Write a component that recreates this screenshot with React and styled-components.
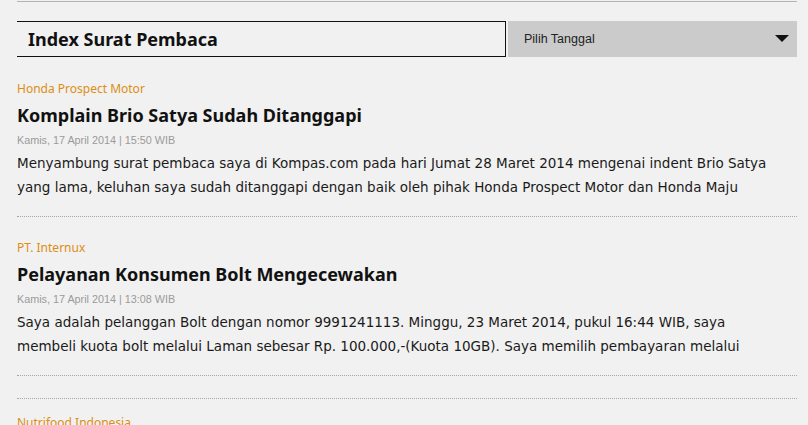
import React from "react";
import styled, { createGlobalStyle } from "styled-components";

const GlobalStyle = createGlobalStyle`
  html, body {
    margin: 0;
    padding: 0;
    background: #f1f1f1;
  }
  body {
    font-family: "Noto Sans", "DejaVu Sans", sans-serif;
    color: #111;
  }
`;

const Page = styled.div`
  width: 780px;
  padding: 0 11px 0 17px;
  height: 425px;
  overflow: hidden;
`;

const TopRule = styled.div`
  margin-top: 1px;
  height: 1px;
  background: #b3b3b3;
`;

const Header = styled.div`
  display: flex;
  margin: 19px 0 1px;
  height: 36px;
`;

const HeaderTitle = styled.h1`
  flex: 0 0 489px;
  box-sizing: border-box;
  margin: 0;
  padding-left: 11px;
  border-top: 1.5px solid #111;
  border-bottom: 1.5px solid #111;
  border-right: 1px solid #111;
  display: flex;
  align-items: center;
  font-size: 18px;
  font-weight: 700;
  color: #111;
`;

const Select = styled.div`
  flex: 1;
  margin-left: 2px;
  background: #cbcbcb;
  display: flex;
  align-items: center;
  justify-content: space-between;
  padding: 0 8px 0 16px;
  font-family: "Liberation Sans", Arial, sans-serif;
  font-size: 12.5px;
  color: #222;
`;

const Item = styled.article`
  padding-top: ${(p) => p.$top || 23}px;
  padding-bottom: 17px;
  border-bottom: 1px dotted #a8a8a8;
`;

const Divider = styled.div`
  margin-top: 22px;
  height: 0;
  border-bottom: 1px dotted #a8a8a8;
`;

const Category = styled.div`
  font-size: 12px;
  line-height: 16px;
  color: #dc8e12;
`;

const Title = styled.h2`
  margin: 6px 0 0;
  font-size: 18px;
  line-height: 24px;
  font-weight: 700;
  color: #111;
`;

const Meta = styled.div`
  margin-top: 6px;
  font-family: "Liberation Sans", Arial, sans-serif;
  font-size: 10.8px;
  line-height: 14px;
  color: #9a9a9a;
`;

const Body = styled.p`
  margin: 4px 0 0;
  font-family: "DejaVu Sans", Verdana, sans-serif;
  font-size: 13.5px;
  line-height: 24px;
  color: #1a1a1a;
  white-space: nowrap;
`;

const articles = [
  {
    category: "Honda Prospect Motor",
    title: "Komplain Brio Satya Sudah Ditanggapi",
    date: "Kamis, 17 April 2014 | 15:50 WIB",
    lines: [
      "Menyambung surat pembaca saya di Kompas.com pada hari Jumat 28 Maret 2014 mengenai indent Brio Satya",
      "yang lama, keluhan saya sudah ditanggapi dengan baik oleh pihak Honda Prospect Motor dan Honda Maju",
    ],
  },
  {
    category: "PT. Internux",
    title: "Pelayanan Konsumen Bolt Mengecewakan",
    date: "Kamis, 17 April 2014 | 13:08 WIB",
    lines: [
      "Saya adalah pelanggan Bolt dengan nomor 9991241113. Minggu, 23 Maret 2014, pukul 16:44 WIB, saya",
      "membeli kuota bolt melalui Laman sebesar Rp. 100.000,-(Kuota 10GB). Saya memilih pembayaran melalui",
    ],
  },
];

function Arrow() {
  return (
    <svg width="14" height="8" viewBox="0 0 14 8">
      <path d="M0 0 L14 0 L7 7 Z" fill="#111" />
    </svg>
  );
}

export default function App() {
  return (
    <>
      <GlobalStyle />
      <Page>
        <TopRule />
        <Header>
          <HeaderTitle>Index Surat Pembaca</HeaderTitle>
          <Select>
            <span>Pilih Tanggal</span>
            <Arrow />
          </Select>
        </Header>
        {articles.map((a) => (
          <Item key={a.title}>
            <Category>{a.category}</Category>
            <Title>{a.title}</Title>
            <Meta>{a.date}</Meta>
            <Body>
              {a.lines.map((l, i) => (
                <React.Fragment key={i}>
                  {l}
                  {i < a.lines.length - 1 && <br />}
                </React.Fragment>
              ))}
            </Body>
          </Item>
        ))}
        <Divider />
        <Item $top={16}>
          <Category>Nutrifood Indonesia</Category>
        </Item>
      </Page>
    </>
  );
}
